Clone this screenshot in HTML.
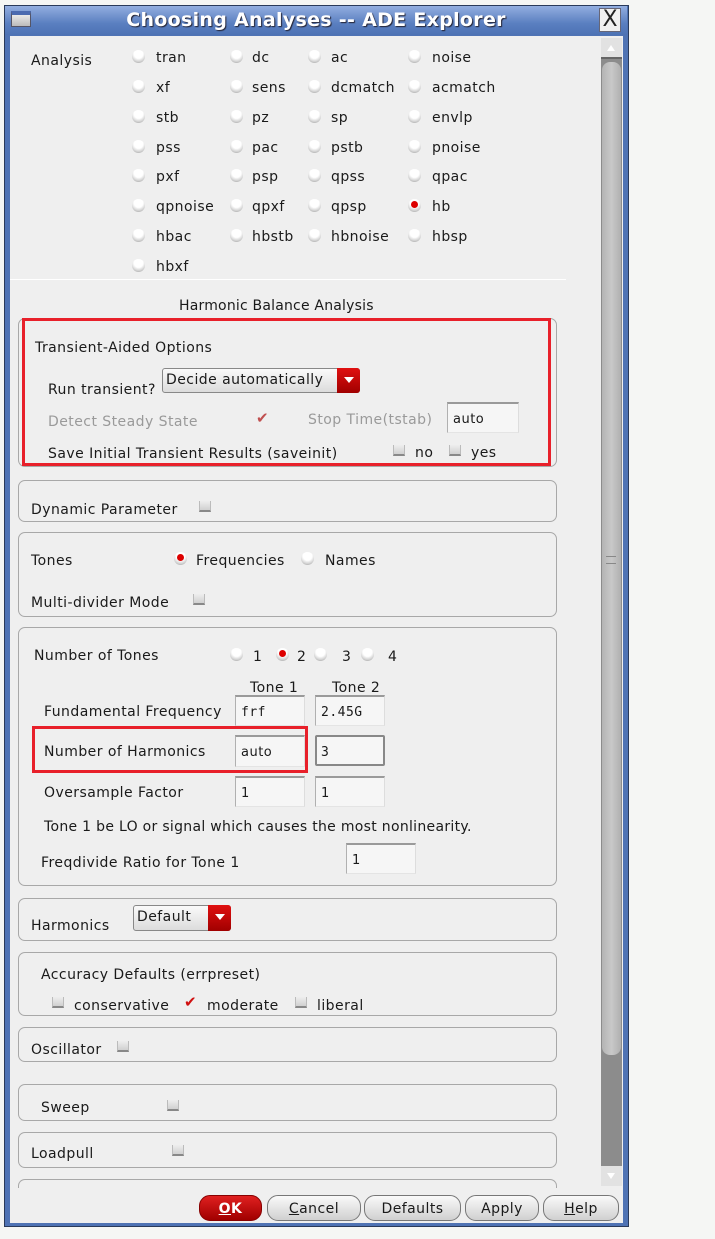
<!DOCTYPE html>
<html><head><meta charset="utf-8">
<style>
*{box-sizing:border-box;margin:0;padding:0}
body{width:715px;height:1239px;background:#f5f6f4;position:relative;overflow:hidden;font-family:"DejaVu Sans","Liberation Sans",sans-serif;font-size:14px;letter-spacing:0.45px;color:#1a1a1a}
.a{position:absolute;white-space:nowrap}
.t{position:absolute;white-space:nowrap;line-height:16px;height:16px;transform:translateY(2px)}
.win{position:absolute;left:4px;top:5px;width:625px;height:1222px;background:#4f73b4;border:1px solid #2a3a5a}
.title{position:absolute;left:5px;top:6px;width:622px;height:29px;background:linear-gradient(#93aee0,#5a7fc0 60%,#4d72b4)}
.content{position:absolute;left:10px;top:36px;width:613px;height:1187px;background:#efefef}
.r{position:absolute;width:13px;height:13px;border-radius:50%;background:radial-gradient(circle at 50% 30%,#fff 40%,#d0d0d0 70%,#8a8a8a 100%)}
.r.on::after{content:"";position:absolute;left:3px;top:2px;width:7px;height:7px;border-radius:50%;background:#d00}
.cb{position:absolute;width:12px;height:11px;background:linear-gradient(#eee,#d0d0d0);border-bottom:2px solid #888;border-left:1px solid #bbb;border-right:1px solid #bbb}
.box{position:absolute;left:18px;width:539px;border:1px solid #a8a8a8;border-radius:7px}
.ent{position:absolute;background:#f6f6f6;border-top:2px solid #9a9a9a;border-left:1px solid #b0b0b0;border-right:1px solid #ddd;border-bottom:1px solid #e4e4e4;font-family:"DejaVu Sans Mono","Liberation Mono",monospace;font-size:13px;letter-spacing:0.5px;padding:8px 0 0 5px}
.combo{position:absolute;border:1px solid #888;border-radius:3px;background:linear-gradient(#fafafa,#dcdcdc);padding:3px 0 0 3px;font-size:14px}
.combo .dd{position:absolute;right:-1px;top:-1px;width:23px;bottom:-1px;background:linear-gradient(#e01010,#a00000);border-radius:0 3px 3px 0}
.combo .dd::after{content:"";position:absolute;left:7px;top:9px;border-left:5px solid transparent;border-right:5px solid transparent;border-top:6px solid #fff}
.btn{position:absolute;top:1195px;height:26px;border:1px solid #777;border-radius:11px;background:linear-gradient(#fafafa,#d0d0d0);text-align:center;line-height:26px;font-size:14px}
.red{position:absolute;border:3px solid #e8202a}
.gray{color:#9a9a9a}
</style></head><body>
<div class="win"></div>
<div class="title"></div>
<div class="a" style="left:11px;top:11px;width:20px;height:16px;background:linear-gradient(#e8e8e8,#bbb);border:1px solid #556;border-top:4px solid #4a6ab0"></div>
<div class="a" style="left:0;top:6px;width:632px;text-align:center;color:#fff;font-weight:bold;font-size:19px;letter-spacing:0.3px;line-height:28px;text-shadow:1px 1px 1px #223">Choosing Analyses -- ADE Explorer</div>
<div class="a" style="left:599px;top:8px;width:22px;height:24px;background:#f0f0f0;border:1px solid #667;font-size:22px;line-height:22px;letter-spacing:0;text-align:center;color:#222">X</div>
<div class="content"></div>
<!-- scrollbar -->
<div class="a" style="left:601px;top:38px;width:21px;height:1148px;background:#8c8c8c"></div>
<div class="a" style="left:601px;top:38px;width:21px;height:21px;background:#e2e2e2;border-bottom:2px solid #666"></div>
<div class="a" style="left:607px;top:45px;border-left:4px solid transparent;border-right:4px solid transparent;border-bottom:6px solid #fff"></div>
<div class="a" style="left:602px;top:62px;width:19px;height:993px;background:linear-gradient(90deg,#b4b4b4,#c8c8c8,#b0b0b0);border-radius:8px"></div>
<div class="a" style="left:606px;top:556px;width:10px;height:8px;border-top:1px solid #888;border-bottom:1px solid #888"></div>
<div class="a" style="left:601px;top:1166px;width:21px;height:20px;background:#e2e2e2"></div>
<div class="a" style="left:607px;top:1173px;border-left:4px solid transparent;border-right:4px solid transparent;border-top:6px solid #fff"></div>

<div class="t" style="left:31px;top:51px">Analysis</div>
<div class="r" style="left:132px;top:50px"></div><div class="t" style="left:156px;top:48px">tran</div>
<div class="r" style="left:230px;top:50px"></div><div class="t" style="left:252px;top:48px">dc</div>
<div class="r" style="left:308px;top:50px"></div><div class="t" style="left:331px;top:48px">ac</div>
<div class="r" style="left:408px;top:50px"></div><div class="t" style="left:432px;top:48px">noise</div>

<div class="r" style="left:132px;top:80px"></div><div class="t" style="left:156px;top:78px">xf</div>
<div class="r" style="left:230px;top:80px"></div><div class="t" style="left:252px;top:78px">sens</div>
<div class="r" style="left:308px;top:80px"></div><div class="t" style="left:331px;top:78px">dcmatch</div>
<div class="r" style="left:408px;top:80px"></div><div class="t" style="left:432px;top:78px">acmatch</div>

<div class="r" style="left:132px;top:110px"></div><div class="t" style="left:156px;top:108px">stb</div>
<div class="r" style="left:230px;top:110px"></div><div class="t" style="left:252px;top:108px">pz</div>
<div class="r" style="left:308px;top:110px"></div><div class="t" style="left:331px;top:108px">sp</div>
<div class="r" style="left:408px;top:110px"></div><div class="t" style="left:432px;top:108px">envlp</div>

<div class="r" style="left:132px;top:140px"></div><div class="t" style="left:156px;top:138px">pss</div>
<div class="r" style="left:230px;top:140px"></div><div class="t" style="left:252px;top:138px">pac</div>
<div class="r" style="left:308px;top:140px"></div><div class="t" style="left:331px;top:138px">pstb</div>
<div class="r" style="left:408px;top:140px"></div><div class="t" style="left:432px;top:138px">pnoise</div>

<div class="r" style="left:132px;top:169px"></div><div class="t" style="left:156px;top:167px">pxf</div>
<div class="r" style="left:230px;top:169px"></div><div class="t" style="left:252px;top:167px">psp</div>
<div class="r" style="left:308px;top:169px"></div><div class="t" style="left:331px;top:167px">qpss</div>
<div class="r" style="left:408px;top:169px"></div><div class="t" style="left:432px;top:167px">qpac</div>

<div class="r" style="left:132px;top:199px"></div><div class="t" style="left:156px;top:197px">qpnoise</div>
<div class="r" style="left:230px;top:199px"></div><div class="t" style="left:252px;top:197px">qpxf</div>
<div class="r" style="left:308px;top:199px"></div><div class="t" style="left:331px;top:197px">qpsp</div>
<div class="r on" style="left:408px;top:199px"></div><div class="t" style="left:432px;top:197px">hb</div>

<div class="r" style="left:132px;top:229px"></div><div class="t" style="left:156px;top:227px">hbac</div>
<div class="r" style="left:230px;top:229px"></div><div class="t" style="left:252px;top:227px">hbstb</div>
<div class="r" style="left:308px;top:229px"></div><div class="t" style="left:331px;top:227px">hbnoise</div>
<div class="r" style="left:408px;top:229px"></div><div class="t" style="left:432px;top:227px">hbsp</div>

<div class="r" style="left:132px;top:259px"></div><div class="t" style="left:156px;top:257px">hbxf</div>

<div class="a" style="left:10px;top:279px;width:556px;height:1px;background:#aaa;border-bottom:1px solid #fff"></div>
<div class="t" style="left:179px;top:296px;letter-spacing:0.2px">Harmonic Balance Analysis</div>

<div class="box" style="top:318px;height:149px"></div>
<div class="red" style="left:22px;top:318px;width:529px;height:148px"></div>
<div class="t" style="left:35px;top:338px">Transient-Aided Options</div>
<div class="t" style="left:48px;top:380px">Run transient?</div>
<div class="combo" style="left:162px;top:368px;width:198px;height:25px">Decide automatically<div class="dd"></div></div>
<div class="t gray" style="left:48px;top:412px">Detect Steady State</div>
<div class="a" style="left:256px;top:409px;color:#c05050;font-size:15px">&#10004;</div>
<div class="t gray" style="left:308px;top:410px">Stop Time(tstab)</div>
<div class="ent" style="left:447px;top:402px;width:72px;height:31px;font-family:'DejaVu Sans',sans-serif">auto</div>
<div class="t" style="left:48px;top:444px">Save Initial Transient Results (saveinit)</div>
<div class="cb" style="left:393px;top:445px"></div><div class="t" style="left:415px;top:443px">no</div>
<div class="cb" style="left:449px;top:445px"></div><div class="t" style="left:471px;top:443px">yes</div>

<div class="box" style="top:480px;height:42px"></div>
<div class="t" style="left:31px;top:500px">Dynamic Parameter</div>
<div class="cb" style="left:199px;top:501px"></div>

<div class="box" style="top:532px;height:85px"></div>
<div class="t" style="left:31px;top:551px">Tones</div>
<div class="r on" style="left:174px;top:552px"></div><div class="t" style="left:196px;top:551px">Frequencies</div>
<div class="r" style="left:301px;top:552px"></div><div class="t" style="left:325px;top:551px">Names</div>
<div class="t" style="left:31px;top:593px">Multi-divider Mode</div>
<div class="cb" style="left:193px;top:594px"></div>

<div class="box" style="top:627px;height:259px"></div>
<div class="t" style="left:34px;top:646px">Number of Tones</div>
<div class="r" style="left:230px;top:648px"></div><div class="t" style="left:253px;top:647px">1</div>
<div class="r on" style="left:276px;top:648px"></div><div class="t" style="left:297px;top:647px">2</div>
<div class="r" style="left:314px;top:648px"></div><div class="t" style="left:342px;top:647px">3</div>
<div class="r" style="left:361px;top:648px"></div><div class="t" style="left:388px;top:647px">4</div>
<div class="t" style="left:250px;top:678px">Tone 1</div>
<div class="t" style="left:332px;top:678px">Tone 2</div>
<div class="t" style="left:44px;top:702px">Fundamental Frequency</div>
<div class="ent" style="left:235px;top:695px;width:70px;height:31px">frf</div>
<div class="ent" style="left:315px;top:695px;width:70px;height:31px">2.45G</div>
<div class="t" style="left:44px;top:742px">Number of Harmonics</div>
<div class="ent" style="left:235px;top:735px;width:70px;height:32px;font-family:'DejaVu Sans',sans-serif">auto</div>
<div class="ent" style="left:315px;top:735px;width:70px;height:31px;border:2px solid #888;border-radius:2px;padding-left:4px">3</div>
<div class="red" style="left:32px;top:726px;width:276px;height:47px"></div>
<div class="t" style="left:44px;top:783px">Oversample Factor</div>
<div class="ent" style="left:235px;top:776px;width:70px;height:31px;font-family:'DejaVu Sans',sans-serif">1</div>
<div class="ent" style="left:315px;top:776px;width:70px;height:31px;font-family:'DejaVu Sans',sans-serif">1</div>
<div class="t" style="left:44px;top:817px;letter-spacing:0.3px">Tone 1 be LO or signal which causes the most nonlinearity.</div>
<div class="t" style="left:41px;top:853px">Freqdivide Ratio for Tone 1</div>
<div class="ent" style="left:346px;top:843px;width:70px;height:31px;font-family:'DejaVu Sans',sans-serif">1</div>

<div class="box" style="top:898px;height:43px"></div>
<div class="t" style="left:31px;top:916px">Harmonics</div>
<div class="combo" style="left:133px;top:905px;width:98px;height:26px">Default<div class="dd"></div></div>

<div class="box" style="top:952px;height:64px"></div>
<div class="t" style="left:41px;top:965px">Accuracy Defaults (errpreset)</div>
<div class="cb" style="left:52px;top:997px"></div><div class="t" style="left:74px;top:996px">conservative</div>
<div class="a" style="left:184px;top:993px;color:#d01010;font-size:15px">&#10004;</div><div class="t" style="left:207px;top:996px">moderate</div>
<div class="cb" style="left:295px;top:997px"></div><div class="t" style="left:317px;top:996px">liberal</div>

<div class="box" style="top:1027px;height:35px"></div>
<div class="t" style="left:31px;top:1040px">Oscillator</div>
<div class="cb" style="left:117px;top:1041px"></div>

<div class="box" style="top:1084px;height:37px"></div>
<div class="t" style="left:41px;top:1098px">Sweep</div>
<div class="cb" style="left:167px;top:1100px"></div>

<div class="box" style="top:1132px;height:36px"></div>
<div class="t" style="left:31px;top:1144px">Loadpull</div>
<div class="cb" style="left:172px;top:1145px"></div>

<div class="box" style="top:1179px;height:30px;border-bottom:none"></div>
<div class="a" style="left:12px;top:1188px;width:588px;height:34px;background:#efefef"></div>

<div class="btn" style="left:199px;width:63px;background:linear-gradient(#e02020,#a00000);border-color:#800;color:#fff;font-weight:bold"><u>O</u>K</div>
<div class="btn" style="left:267px;width:94px"><u>C</u>ancel</div>
<div class="btn" style="left:364px;width:97px">Defaults</div>
<div class="btn" style="left:465px;width:74px">Apply</div>
<div class="btn" style="left:543px;width:76px"><u>H</u>elp</div>
</body></html>
